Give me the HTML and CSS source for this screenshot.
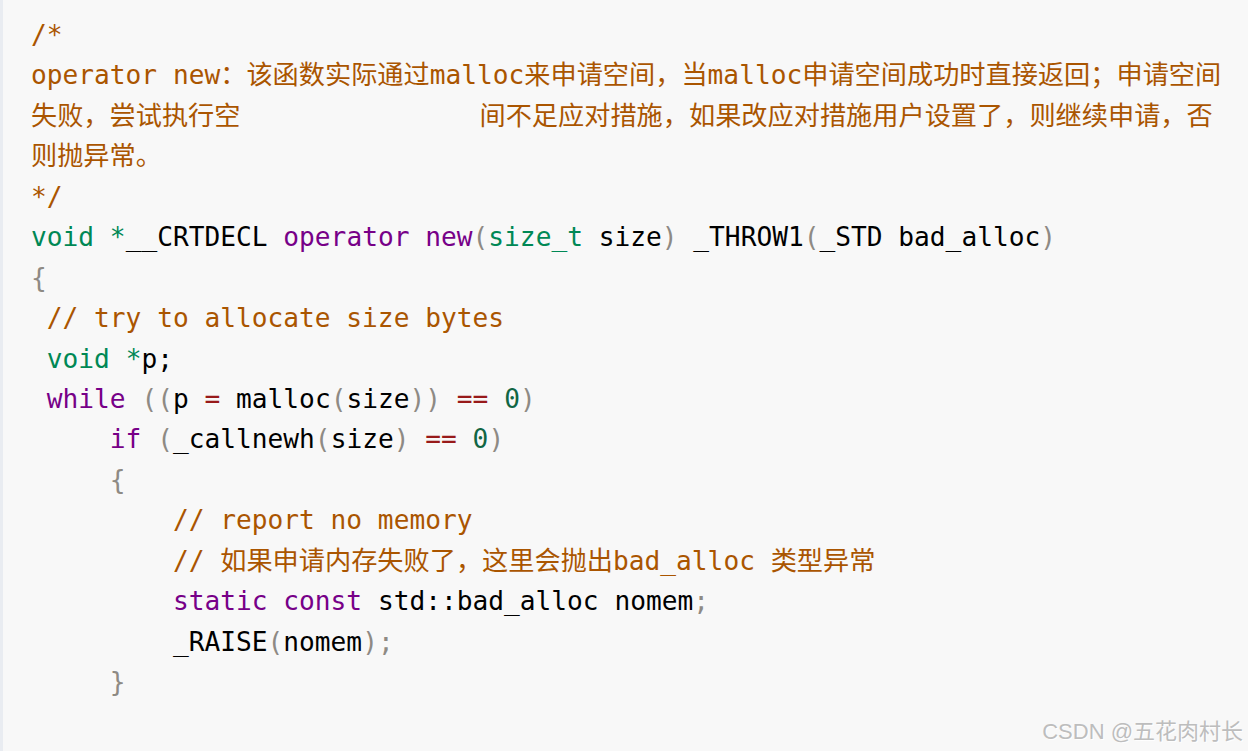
FILE: index.html
```html
<!DOCTYPE html>
<html lang="zh-CN">
<head>
<meta charset="utf-8">
<title>operator new</title>
<link rel="stylesheet" href="styles.css">
</head>
<body>
<div class="block">
<pre class="code"><code><span class="c">/*
operator new：该函数实际通过malloc来申请空间，当malloc申请空间成功时直接返回；申请空间失败，尝试执行空<span class="gap"></span>间不足应对措施，如果改应对措施用户设置了，则继续申请，否则抛异常。
*/</span>
<span class="t">void</span> <span class="t">*</span>__CRTDECL <span class="k">operator</span> <span class="k">new</span><span class="b">(</span><span class="t">size_t</span> size<span class="b">)</span> _THROW1<span class="b">(</span>_STD bad_alloc<span class="b">)</span>
<span class="b">{</span>
 <span class="c">// try to allocate size bytes</span>
 <span class="t">void</span> <span class="t">*</span>p;
 <span class="k">while</span> <span class="b">((</span>p <span class="o">=</span> malloc<span class="b">(</span>size<span class="b">))</span> <span class="o">==</span> <span class="n">0</span><span class="b">)</span>
     <span class="k">if</span> <span class="b">(</span>_callnewh<span class="b">(</span>size<span class="b">)</span> <span class="o">==</span> <span class="n">0</span><span class="b">)</span>
     <span class="b">{</span>
         <span class="c">// report no memory</span>
         <span class="c">// 如果申请内存失败了，这里会抛出bad_alloc 类型异常</span>
         <span class="k">static</span> <span class="k">const</span> std::bad_alloc nomem<span class="b">;</span>
         _RAISE<span class="b">(</span>nomem<span class="b">);</span>
     <span class="b">}</span>
</code></pre>
<div class="mark">CSDN @五花肉村长</div>
</div>
</body>
</html>
```

FILE: styles.css
```css
html, body {
  margin: 0;
  padding: 0;
  background: #f8f8f8;
}

.block {
  position: relative;
  height: 751px;
  overflow: hidden;
  background: #f8f8f8;
  border-left: 3px solid #e9ecf1;
  box-sizing: border-box;
}

.code {
  margin: 0;
  padding: 15px 16px 0 28px;
  font-family: "DejaVu Sans Mono", "Noto Sans CJK SC", monospace;
  font-size: 26.2px;
  line-height: 40.44px;
  color: #000;
  white-space: pre-wrap;
  word-break: break-all;
}

.code code {
  font-family: inherit;
}

.gap {
  display: inline-block;
  width: 239px;
}

.c { color: #aa5500; }
.t { color: #008855; }
.k { color: #770088; }
.n { color: #116644; }
.o { color: #981a1a; }
.b { color: #8e8a84; }

.mark {
  position: absolute;
  right: 5px;
  bottom: 6px;
  font-family: "Liberation Sans", "Noto Sans CJK SC", sans-serif;
  font-size: 22px;
  line-height: 26px;
  color: #bdbdbd;
  text-shadow: 1px 1px 1px #ffffff;
}
```
